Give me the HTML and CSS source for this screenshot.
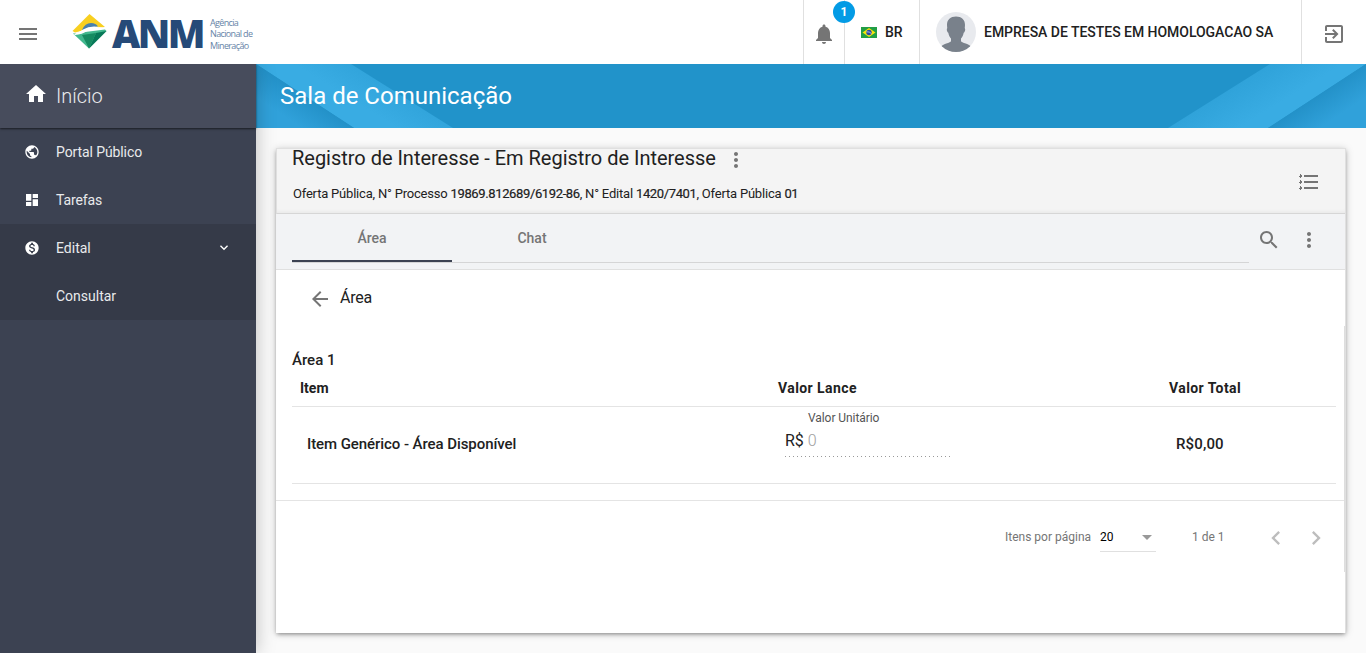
FILE: index.html
```html
<!DOCTYPE html>
<html lang="pt-BR">
<head>
<meta charset="utf-8">
<title>Sala de Comunicação</title>
<link rel="stylesheet" href="styles.css">
</head>
<body>
<header class="topbar">
  <svg class="icon menu-icon" viewBox="0 0 24 24"><path d="M3 18h18v-2H3v2zm0-5h18v-2H3v2zm0-7v2h18V6H3z"/></svg>
  <div class="brand">
    <svg class="brand-mark" viewBox="0 0 36 36">
      <path fill="#f8cf20" d="M18.500 1 34 14 22 15 4 19.500 1.500 18z"/>
      <path fill="#4880ad" d="M11 17q3-7 9-7 5 0 7 3.500l-10 2-6 3z"/>
      <path fill="#42b88e" d="M2 20.500 34 16.500l1.500 1.500L18 35.500z"/>
      <path fill="#087858" d="M25 20l10.500-2L18 35.500z"/>
      <path fill="#168b61" d="M11 22l14-2-7 15.500z"/>
      <path fill="#fff" d="M3 21Q8 19.500 12 16.500 21 11 34 15.500 24 13.500 17 17.500 11 21.500 4 22z"/>
    </svg>
    <span class="brand-name">ANM</span>
    <span class="brand-sub">Agência<br>Nacional de<br>Mineração</span>
  </div>
  <div class="cell bell"><svg class="icon" viewBox="0 0 24 24"><path d="M12 22c1.100 0 2-.9 2-2h-4c0 1.100.89 2 2 2zm6-6v-5c0-3.070-1.640-5.640-4.500-6.320V4c0-.83-.67-1.500-1.500-1.500s-1.500.67-1.500 1.500v.68C7.630 5.360 6 7.920 6 11v5l-2 2v1h16v-1l-2-2z"/></svg><span class="badge">1</span></div>
  <div class="cell lang">
    <svg class="flag" viewBox="0 0 16 11"><path fill="#229e45" d="M0 0h16v11H0z"/><path fill="#f8e509" d="M8 1l6.500 4.500L8 10 1.500 5.500z"/><circle cx="8" cy="5.500" r="2.700" fill="#2b49a3"/><path d="M5.500 4.800q3-.4 5 1.800" fill="none" stroke="#fff" stroke-width=".6"/></svg>
    <span class="lang-name">BR</span>
  </div>
  <div class="cell user">
    <svg class="avatar" viewBox="0 0 40 40"><defs><clipPath id="round"><circle cx="20" cy="20" r="20"/></clipPath></defs><circle cx="20" cy="20" r="20" fill="#e8eaee"/><path clip-path="url(#round)" fill="#79818b" d="M20 4.500c5.500 0 9 3 9 8.500 0 1.500-.3 2.400-.2 3.200.7.500.5 3.800-1.100 4.500-.6 3-1.500 4.500-2.700 5.800v2.500c0 2 9 2.500 11 7V41H4v-5c2-4.500 11-5 11-7v-2.500c-1.200-1.300-2.100-2.800-2.700-5.800-1.600-.7-1.800-4-1.100-4.500.1-.8-.2-1.700-.2-3.200 0-5.500 3.500-8.500 9-8.500z"/></svg>
    <span class="user-name">EMPRESA DE TESTES EM HOMOLOGACAO SA</span>
  </div>
  <div class="cell exit"><svg class="icon" viewBox="0 0 24 24"><path d="M10.090 15.590L11.500 17l5-5-5-5-1.410 1.410L12.670 11H3v2h9.670l-2.580 2.590zM19 3H5c-1.110 0-2 .9-2 2v4h2V5h14v14H5v-4H3v4c0 1.100.89 2 2 2h14c1.100 0 2-.9 2-2V5c0-1.100-.9-2-2-2z"/></svg></div>
</header>
<div class="body">
  <nav class="sidebar">
    <a class="home"><svg class="icon" viewBox="0 0 24 24"><path d="M10 20v-6h4v6h5v-8h3L12 3 2 12h3v8z"/></svg><span>Início</span></a>
    <a class="nav-item"><svg viewBox="0 0 24 24"><path d="M12 2C6.480 2 2 6.480 2 12s4.480 10 10 10 10-4.480 10-10S17.520 2 12 2zm-1 17.930c-3.950-.49-7-3.850-7-7.930 0-.62.080-1.210.21-1.790L9 15v1c0 1.100.9 2 2 2v1.930zm6.900-2.540c-.26-.81-1-1.390-1.900-1.390h-1v-3c0-.55-.45-1-1-1H8v-2h2c.55 0 1-.45 1-1V7h2c1.100 0 2-.9 2-2v-.41c2.930 1.190 5 4.060 5 7.410 0 2.080-.8 3.970-2.100 5.390z"/></svg><span class="t-portal">Portal Público</span></a>
    <a class="nav-item"><svg viewBox="0 0 24 24"><path d="M3 13h8V3H3v10zm0 8h8v-6H3v6zm10 0h8V11h-8v10zm0-18v6h8V3h-8z"/></svg><span class="t-portal">Tarefas</span></a>
    <div class="group">
      <a class="nav-item"><svg viewBox="0 0 24 24"><path d="M12 2C6.480 2 2 6.480 2 12s4.480 10 10 10 10-4.480 10-10S17.520 2 12 2zm1.410 16.090V20h-2.670v-1.930c-1.710-.36-3.160-1.460-3.270-3.400h1.960c.1 1.050.82 1.870 2.650 1.870 1.960 0 2.400-.98 2.400-1.590 0-.83-.44-1.610-2.670-2.140-2.480-.6-4.180-1.620-4.180-3.670 0-1.720 1.390-2.840 3.110-3.210V4h2.670v1.950c1.860.45 2.790 1.860 2.850 3.390H14.300c-.05-1.110-.64-1.870-2.220-1.870-1.500 0-2.400.68-2.400 1.640 0 .84.65 1.390 2.670 1.910s4.180 1.390 4.180 3.910c-.01 1.830-1.380 2.830-3.120 3.160z"/></svg><span>Edital</span><svg class="chev" viewBox="0 0 24 24"><path d="M7.410 7.840L12 12.420l4.590-4.580L18 9.250l-6 6-6-6z"/></svg></a>
      <a class="nav-item sub"><span>Consultar</span></a>
    </div>
  </nav>
  <main class="content">
    <div class="banner">
      <svg class="banner-art" viewBox="0 0 1110 64" preserveAspectRatio="none">
        <defs>
          <linearGradient id="dl" gradientUnits="userSpaceOnUse" x1="50" y1="32" x2="34" y2="56"><stop offset="0" stop-color="#2391c8"/><stop offset="1" stop-color="#30a1da"/></linearGradient>
          <linearGradient id="ll" gradientUnits="userSpaceOnUse" x1="125" y1="54" x2="146" y2="20"><stop offset="0" stop-color="#39ace3"/><stop offset="1" stop-color="#2fa2d9"/></linearGradient>
          <linearGradient id="lr" gradientUnits="userSpaceOnUse" x1="985" y1="16" x2="1006" y2="50"><stop offset="0" stop-color="#2fa2d9"/><stop offset="1" stop-color="#39ace3"/></linearGradient>
          <linearGradient id="dr" gradientUnits="userSpaceOnUse" x1="1060" y1="32" x2="1076" y2="56"><stop offset="0" stop-color="#2391c8"/><stop offset="1" stop-color="#30a1da"/></linearGradient>
        </defs>
        <path fill="url(#ll)" d="M0 0h95l102 64H98z"/><path fill="url(#dl)" d="M0 0l98 64H0z"/>
        <path fill="url(#lr)" d="M1014 0h96L1012 64H912z"/><path fill="url(#dr)" d="M1110 0v64h-98z"/>
      </svg>
      <h1>Sala de Comunicação</h1>
    </div>
    <section class="card">
      <div class="card-head">
        <div class="card-title">
          <h2><span>Registro de Interesse - Em Registro de Interesse</span><svg class="icon" viewBox="0 0 24 24"><path d="M12 8c1.100 0 2-.9 2-2s-.9-2-2-2-2 .9-2 2 .9 2 2 2zm0 2c-1.100 0-2 .9-2 2s.9 2 2 2 2-.9 2-2-.9-2-2-2zm0 6c-1.100 0-2 .9-2 2s.9 2 2 2 2-.9 2-2-.9-2-2-2z"/></svg></h2>
          <p>Oferta Pública, N° Processo <b>19869.812689/6192-86</b>, N° Edital <b>1420/7401</b>, Oferta Pública <b>01</b></p>
        </div>
        <svg class="icon list-icon" viewBox="0 0 24 24"><path d="M7 5h14v2H7zm0 6h14v2H7zm0 6h14v2H7zM3 4h1v1h1v2H4v1H3V7H2V6h1zm0 6h1v1h1v2H4v1H3v-1H2v-1h1zm0 6h1v1h1v2H4v1H3v-1H2v-1h1z"/></svg>
      </div>
      <div class="tabs">
        <div class="tab-list"><span class="tab active">Área</span><span class="tab">Chat</span></div>
        <svg class="icon" viewBox="0 0 24 24"><path d="M15.500 14h-.79l-.28-.27C15.410 12.590 16 11.110 16 9.500 16 5.910 13.090 3 9.500 3S3 5.910 3 9.500 5.910 16 9.500 16c1.610 0 3.090-.59 4.230-1.570l.27.28v.79l5 4.990L20.490 19l-4.990-5zm-6 0C7.010 14 5 11.990 5 9.500S7.010 5 9.500 5 14 7.010 14 9.500 11.990 14 9.500 14z"/></svg>
        <svg class="icon more" viewBox="0 0 24 24"><path d="M12 8c1.100 0 2-.9 2-2s-.9-2-2-2-2 .9-2 2 .9 2 2 2zm0 2c-1.100 0-2 .9-2 2s.9 2 2 2 2-.9 2-2-.9-2-2-2zm0 6c-1.100 0-2 .9-2 2s.9 2 2 2 2-.9 2-2-.9-2-2-2z"/></svg>
      </div>
      <div class="back"><svg class="icon" viewBox="0 0 24 24"><path d="M20 11H7.830l5.590-5.590L12 4l-8 8 8 8 1.410-1.410L7.830 13H20v-2z"/></svg><span>Área</span></div>
      <div class="panel">
        <div class="area-name">Área 1</div>
        <div class="row head"><span>Item</span><span class="wide">Valor Lance</span><span class="wide">Valor Total</span></div>
        <div class="row data">
          <span class="item-name">Item Genérico - Área Disponível</span>
          <div class="field"><label>Valor Unitário</label><div class="input"><span>R$</span><span class="ph">0</span></div></div>
          <span class="total">R$0,00</span>
        </div>
        <div class="pager">
          <span class="pager-label">Itens por página</span>
          <div class="select"><span>20</span><svg viewBox="0 0 10 5"><path d="M0 0h10L5 5z"/></svg></div>
          <span class="range">1 de 1</span>
          <svg class="icon prev" viewBox="0 0 24 24"><path d="M15.410 7.410L14 6l-6 6 6 6 1.410-1.410L10.830 12z"/></svg>
          <svg class="icon next" viewBox="0 0 24 24"><path d="M10 6L8.590 7.410 13.170 12l-4.580 4.590L10 18l6-6z"/></svg>
        </div>
      </div>
    </section>
  </main>
</div>
</body>
</html>
```
FILE: styles.css
```css
* { box-sizing: border-box; }
body { margin: 0; height: 653px; overflow: hidden; display: flex; flex-direction: column; background: #fafafa; color: #212121; font-family: Roboto, sans-serif; font-size: 14px; }
h1, h2, p { margin: 0; font-weight: 400; }
svg { display: block; flex: none; }
.icon { width: 24px; height: 24px; fill: #757575; }

.topbar { height: 64px; flex: none; display: flex; background: #fff; position: relative; z-index: 2; }
.menu-icon { margin: 22px 0 0 16px; }
.brand { display: flex; margin-left: 31px; flex: 1; }
.brand-mark { width: 36px; height: 36px; margin-top: 13px; }
.brand-name { margin: 10px 0 0 5px; width: 98px; color: #264a78; font: 800 39px/46px "Open Sans", sans-serif; letter-spacing: -2.600px; }
.brand-sub { margin-top: 17px; color: #6684a6; font: 400 9px/11.300px "Open Sans", sans-serif; letter-spacing: -.65px; white-space: nowrap; }
.cell { border-left: 1px solid #e0e0e0; display: flex; }
.bell { width: 41px; padding: 22px 0 0 8px; position: relative; }
.badge { position: absolute; left: 29px; top: 1px; width: 22px; height: 22px; border-radius: 50%; background: #039be5; color: #fff; font-weight: 700; font-size: 12px; line-height: 22px; text-align: center; }
.lang { width: 75px; padding-left: 16px; }
.flag { width: 16px; height: 11px; margin-top: 27px; }
.lang-name { margin: 24px 0 0 8px; font-weight: 500; line-height: 17px; }
.user { width: 382px; padding: 12px 0 0 16px; }
.avatar { width: 40px; height: 40px; }
.user-name { margin: 12px 0 0 8px; font-weight: 500; line-height: 17px; letter-spacing: -.03px; white-space: nowrap; }
.exit { width: 65px; padding: 22px 0 0 20px; }

.body { flex: 1; display: flex; min-height: 0; }
.sidebar { width: 256px; flex: none; background: #3c4252; color: #e9eaec; box-shadow: 0 0 18px rgba(0, 0, 0, .25); z-index: 1; }
.home { height: 64px; display: flex; background: #474c5c; padding: 18px 0 0 24px; box-shadow: 0 1px 2px rgba(0, 0, 0, .6); font-size: 20px; font-weight: 300; line-height: 28px; position: relative; }
.home .icon { fill: #fff; }
.home span { margin-left: 8px; }
.nav-item { height: 48px; display: flex; align-items: center; padding: 0 24px; font-weight: 400; }
.nav-item svg { width: 16px; height: 16px; fill: #fff; margin-right: 16px; }
.nav-item .chev { margin: 0 0 0 auto; }
.t-portal { letter-spacing: -.1px; }
.group { background: #353a48; }
.nav-item.sub { padding-left: 56px; }

.content { flex: 1; min-width: 0; display: flex; flex-direction: column; }
.banner { height: 64px; display: grid; background: #2193ca; flex: none; }
.banner > * { grid-area: 1 / 1; }
.banner-art { width: 1110px; height: 64px; }
h1 { color: #fff; font-size: 24px; line-height: 32px; padding: 16px 24px; z-index: 1; }
.card { width: 1070px; height: 485px; margin: 20px 0 0 20px; background: #fff; border-top: 1px solid #e0e0e0; border-right: 1px solid #e0e0e0; box-shadow: 0 2px 4px -1px rgba(0, 0, 0, .4), 0 1px 8px rgba(0, 0, 0, .18); }
.card-head { height: 65px; display: flex; justify-content: space-between; background: #f4f4f4; border-left: 1px solid #e0e0e0; border-bottom: 1px solid #d6d6d6; padding-left: 16px; box-shadow: inset 0 -4px 4px -3px rgba(0, 0, 0, .06); }
h2 { display: flex; margin-left: -1px; font-size: 20px; line-height: 18px; height: 28px; letter-spacing: -.02px; white-space: nowrap; }
h2 .icon { margin: -1px 0 0 8px; }
.card-title p { font-size: 13px; line-height: 18px; margin-top: 8px; letter-spacing: -.2px; white-space: nowrap; }
.card-title b { font-weight: 400; letter-spacing: -.37px; -webkit-text-stroke: .2px; }
.list-icon { margin: 21px 24px 0 0; }
.tabs { height: 56px; display: flex; background: #f2f3f5; border-bottom: 1px solid #e0e0e0; padding: 0 24px 0 16px; }
.tab-list { width: 957px; height: 49px; border-bottom: 1px solid #d5d5d6; display: flex; margin-right: 8px; }
.tab { width: 160px; height: 48px; line-height: 48px; text-align: center; color: #757575; font-weight: 500; }
.active { border-bottom: 2px solid #3c4252; }
.tabs .icon { margin-top: 14px; }
.tabs .more { margin-left: 16px; }
.back { height: 56px; display: flex; padding: 17px 0 0 32px; font-size: 16px; line-height: 22px; }
.back span { margin-left: 8px; letter-spacing: -.2px; }
.panel { height: 246px; border-right: 1px solid #dedede; }
.area-name { margin-left: 16px; padding-top: 25px; height: 45px; font-size: 15px; line-height: 18px; font-weight: 500; }
.row { display: grid; grid-template-columns: 478px 391px 175px; width: 1044px; margin-left: 16px; border-bottom: 1px solid #e4e4e4; }
.head { height: 36px; padding-top: 8px; font-weight: 700; line-height: 18px; font-size: 14px; }
.head span { padding-left: 8px; }
.head .wide { letter-spacing: .42px; }
.data { height: 77px; font-size: 15px; font-weight: 500; }
.item-name, .total { padding-left: 15px; line-height: 74px; letter-spacing: -.07px; }
.total { letter-spacing: .15px; }
.field { padding: 4px 0 0 14px; font-weight: 400; }
.field label { display: block; margin-left: 24px; font-size: 12px; line-height: 15px; letter-spacing: -.07px; color: #555; }
.input { width: 167px; display: flex; gap: 4px; height: 31px; padding: 5px 0 0 1px; background: repeating-linear-gradient(90deg, transparent 0 1px, #999 1px 2px, transparent 2px 4px) bottom / 100% 1px no-repeat; font-size: 16px; line-height: 20px; }
.ph { color: #9e9e9e; font-weight: 300; }
.pager { height: 73px; margin-top: 16px; border-top: 1px solid #e4e4e4; display: flex; font-size: 12px; line-height: 16px; padding: 28px 0 0 729px; color: #757575; }
.pager-label { width: 95px; white-space: nowrap; }
.select { width: 56px; height: 23px; display: flex; justify-content: space-between; border-bottom: 1px solid #e0e0e0; color: #000; padding-right: 4px; }
.select svg { width: 10px; height: 5px; margin-top: 6px; fill: #999; }
.range { margin-left: 36px; width: 70px; }
.pager .icon { width: 28px; height: 28px; fill: #bdbdbd; margin-top: -5px; }
.pager .next { margin-left: 12px; }
```
